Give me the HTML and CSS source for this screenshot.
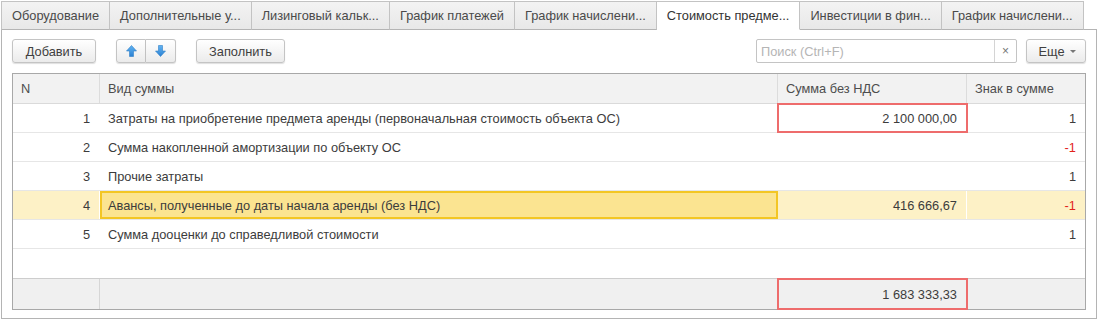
FILE: index.html
```html
<!DOCTYPE html>
<html lang="ru">
<head>
<meta charset="utf-8">
<title>Стоимость предмета аренды</title>
<link rel="stylesheet" href="styles.css">
</head>
<body>
<div class="tabs">
  <div class="tab">Оборудование</div>
  <div class="tab">Дополнительные у...</div>
  <div class="tab">Лизинговый кальк...</div>
  <div class="tab">График платежей</div>
  <div class="tab">График начислени...</div>
  <div class="tab active">Стоимость предме...</div>
  <div class="tab">Инвестиции в фин...</div>
  <div class="tab">График начислени...</div>
</div>
<div class="panel">
  <div class="toolbar">
    <button class="btn btn-add">Добавить</button>
    <div class="btn-group">
      <button class="btn btn-icon btn-left" aria-label="Вверх">
        <svg width="11" height="12" viewBox="0 0 11 12"><defs><linearGradient id="gu" x1="0" y1="0" x2="0" y2="1"><stop offset="0" stop-color="#63b4f2"/><stop offset="1" stop-color="#2a80d2"/></linearGradient></defs><path d="M5.5 0.5 L10.5 6 L7.5 6 L7.5 11.5 L3.5 11.5 L3.5 6 L0.5 6 Z" fill="url(#gu)" stroke="#2f7fc8" stroke-width="0.6" stroke-linejoin="round"/></svg>
      </button>
      <button class="btn btn-icon btn-right" aria-label="Вниз">
        <svg width="11" height="12" viewBox="0 0 11 12"><defs><linearGradient id="gd" x1="0" y1="0" x2="0" y2="1"><stop offset="0" stop-color="#63b4f2"/><stop offset="1" stop-color="#2a80d2"/></linearGradient></defs><path d="M3.5 0.5 L7.5 0.5 L7.5 6 L10.5 6 L5.5 11.5 L0.5 6 L3.5 6 Z" fill="url(#gd)" stroke="#2f7fc8" stroke-width="0.6" stroke-linejoin="round"/></svg>
      </button>
    </div>
    <button class="btn btn-fill">Заполнить</button>
    <div class="search">
      <span class="ph">Поиск (Ctrl+F)</span>
      <span class="clear">×</span>
    </div>
    <button class="btn btn-more">Еще <span class="caret"></span></button>
  </div>

  <div class="table">
    <div class="row head">
      <div class="cell">N</div>
      <div class="cell">Вид суммы</div>
      <div class="cell">Сумма без НДС</div>
      <div class="cell">Знак в сумме</div>
    </div>
    <div class="row">
      <div class="cell num">1</div>
      <div class="cell">Затраты на приобретение предмета аренды (первоначальная стоимость объекта ОС)</div>
      <div class="cell num mark">2 100 000,00</div>
      <div class="cell num">1</div>
    </div>
    <div class="row">
      <div class="cell num">2</div>
      <div class="cell">Сумма накопленной амортизации по объекту ОС</div>
      <div class="cell num"></div>
      <div class="cell num neg">-1</div>
    </div>
    <div class="row">
      <div class="cell num">3</div>
      <div class="cell">Прочие затраты</div>
      <div class="cell num"></div>
      <div class="cell num">1</div>
    </div>
    <div class="row selected">
      <div class="cell num">4</div>
      <div class="cell current">Авансы, полученные до даты начала аренды (без НДС)</div>
      <div class="cell num">416 666,67</div>
      <div class="cell num neg">-1</div>
    </div>
    <div class="row">
      <div class="cell num">5</div>
      <div class="cell">Сумма дооценки до справедливой стоимости</div>
      <div class="cell num"></div>
      <div class="cell num">1</div>
    </div>
    <div class="empty"></div>
    <div class="row foot">
      <div class="cell"></div>
      <div class="cell"></div>
      <div class="cell num mark">1 683 333,33</div>
      <div class="cell"></div>
    </div>
  </div>
</div>
</body>
</html>
```

FILE: styles.css
```css
html, body {
  margin: 0;
  background: #ffffff;
}

body {
  padding: 1px 0 0 1px;
  font-family: "Liberation Sans", Arial, sans-serif;
  font-size: 12.8px;
  color: #3c3c3c;
  width: 1103px;
}

.tabs {
  display: flex;
  margin-bottom: -1px;
  position: relative;
  z-index: 1;
}

.tab {
  box-sizing: border-box;
  height: 29px;
  padding: 0 10px;
  display: flex;
  align-items: center;
  white-space: nowrap;
  color: #4a4a4a;
  background: linear-gradient(#f3f3f3, #e8e8e8);
  border-top: 1px solid #c3c3c3;
  border-right: 1px solid #c3c3c3;
  border-bottom: 1px solid #b4b4b4;
}

.tab:first-child {
  border-left: 1px solid #c3c3c3;
}

.tab.active {
  background: #ffffff;
  border-bottom-color: #ffffff;
  color: #333333;
}

.panel {
  box-sizing: border-box;
  width: 1096px;
  border: 1px solid #b4b4b4;
  padding: 9px 10px 8px 10px;
  background: #ffffff;
}

.toolbar {
  display: flex;
  align-items: center;
  height: 24px;
}

.btn {
  box-sizing: border-box;
  height: 24px;
  margin: 0;
  padding: 0;
  border: 1px solid #c4c4c4;
  border-radius: 3px;
  background: linear-gradient(#ffffff, #ebebeb);
  box-shadow: 0 1px 1px rgba(0, 0, 0, 0.13);
  font-family: inherit;
  font-size: 12.8px;
  color: #404040;
  display: flex;
  align-items: center;
  justify-content: center;
}

.btn-add {
  width: 84px;
}

.btn-group {
  display: flex;
  margin-left: 20px;
}

.btn-icon {
  width: 30px;
}

.btn-left {
  border-radius: 3px 0 0 3px;
}

.btn-right {
  border-radius: 0 3px 3px 0;
  border-left: none;
}

.btn-fill {
  width: 89px;
  margin-left: 20px;
}

.search {
  box-sizing: border-box;
  margin-left: auto;
  width: 261px;
  height: 24px;
  border: 1px solid #c4c4c4;
  border-radius: 2px;
  display: flex;
  background: #ffffff;
}

.ph {
  flex: 1;
  display: flex;
  align-items: center;
  padding-left: 4px;
  color: #b5b5b5;
}

.clear {
  width: 21px;
  border-left: 1px solid #d4d4d4;
  display: flex;
  align-items: center;
  justify-content: center;
  color: #777777;
  font-size: 12px;
}

.btn-more {
  width: 60px;
  margin-left: 9px;
  gap: 5px;
  padding-left: 2px;
}

.caret {
  width: 0;
  height: 0;
  border-left: 3px solid transparent;
  border-right: 3px solid transparent;
  border-top: 3px solid #777777;
  margin-top: 1px;
}

.table {
  margin-top: 10px;
  width: 1074px;
  box-sizing: border-box;
  border: 1px solid #a8a8a8;
}

.row {
  display: grid;
  grid-template-columns: 87px 678px 189px 118px;
  height: 29px;
  box-sizing: border-box;
  border-bottom: 1px solid #e6e6e6;
}

.cell {
  box-sizing: border-box;
  display: flex;
  align-items: center;
  padding: 0 9px 0 8px;
  white-space: nowrap;
  overflow: hidden;
  border-right: 1px solid #ffffff;
}

.cell:last-child {
  border-right: none;
}

.num {
  justify-content: flex-end;
}

.neg {
  color: #e2231a;
}

.head {
  height: 30px;
  background: #f2f2f2;
  border-bottom: 1px solid #dadada;
  color: #4d4d4d;
}

.head .cell {
  border-right-color: #dcdcdc;
}

.selected {
  background: #fdf1c6;
}

.current {
  background: #fbe491;
  border: 2px solid #f3c624;
  padding-left: 6px;
}

.mark {
  outline: 2px solid #ee6c6c;
  outline-offset: -1px;
  position: relative;
  z-index: 1;
}

.empty {
  height: 29px;
}

.foot {
  height: 31px;
  background: #f0f0f0;
  border-top: 1px solid #cdcdcd;
  border-bottom: none;
}

.foot .cell {
  border-right-color: #d6d6d6;
}
```
